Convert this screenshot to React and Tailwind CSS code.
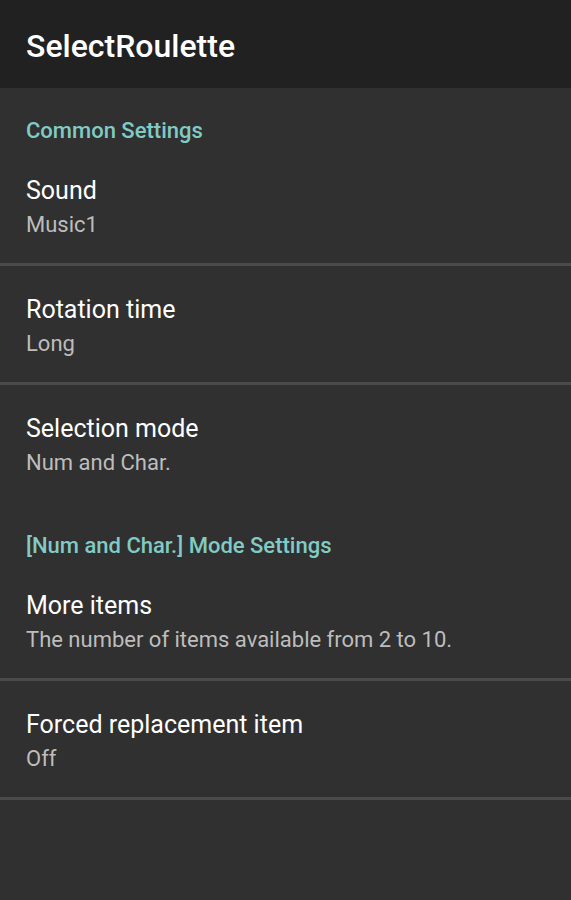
const font = { fontFamily: 'Roboto, "Noto Sans", sans-serif' };

function Category({ label, top }) {
  return (
    <div className={`px-[26px] pb-[4px] ${top}`}>
      <p className="text-[#80cbc4] text-[22px] font-medium leading-[24px]">{label}</p>
    </div>
  );
}

function Item({ title, summary, divider = true }) {
  return (
    <div className={divider ? 'border-b-[3px] border-[#4a4a4a]' : ''}>
      <div className="px-[26px] pt-[29px] pb-[25px]">
        <p className="text-white text-[25px] leading-[30px]">{title}</p>
        <p className="text-[#bdbdbd] text-[22px] leading-[26px] mt-[6px]">{summary}</p>
      </div>
    </div>
  );
}

export default function App() {
  return (
    <div className="w-[571px] h-[900px] bg-[#303030] overflow-hidden" style={font}>
      <div className="h-[88px] bg-[#212121] flex items-center px-[26px] pt-[4px]">
        <h1 className="text-white text-[32px] font-medium leading-none">SelectRoulette</h1>
      </div>
      <Category label="Common Settings" top="pt-[31px]" />
      <Item title="Sound" summary="Music1" />
      <Item title="Rotation time" summary="Long" />
      <Item title="Selection mode" summary="Num and Char." divider={false} />
      <Category label="[Num and Char.] Mode Settings" top="pt-[33px]" />
      <Item title="More items" summary="The number of items available from 2 to 10." />
      <Item title="Forced replacement item" summary="Off" />
    </div>
  );
}
